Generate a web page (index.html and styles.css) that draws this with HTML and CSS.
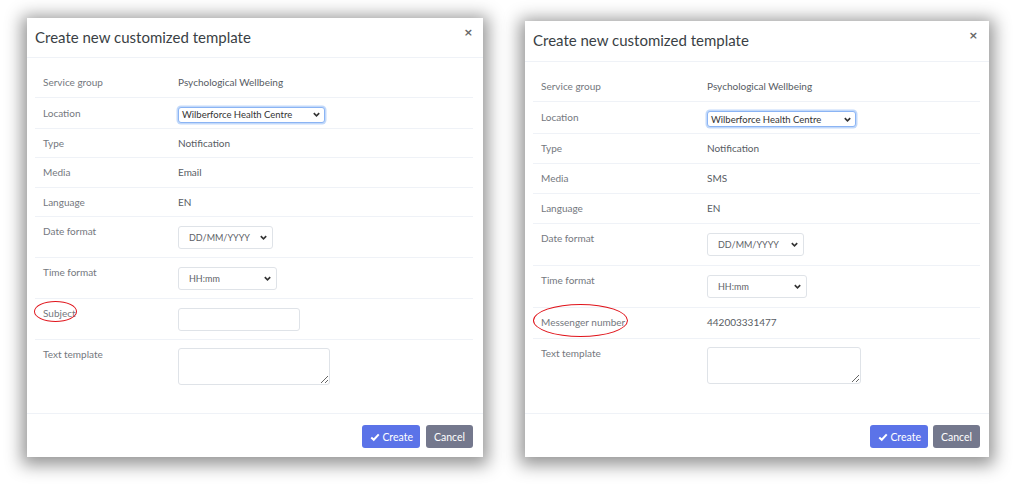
FILE: index.html
```html
<!DOCTYPE html>
<html lang="en">
<head>
    <meta charset="UTF-8">
    <title>Create new customized template</title>
    <link rel="stylesheet" href="styles.css">
</head>
<body>
    <div class="page">
        <!-- EMAIL TEMPLATE MODAL -->
        <div class="modal modal-email">
            <div class="modal-header">
                <h5 class="modal-title">Create new customized template</h5>
                <button class="close-btn">&times;</button>
            </div>
            <div class="modal-body">
                <table class="detail-table">
                    <tr>
                        <td class="label">Service group</td>
                        <td class="value">Psychological Wellbeing</td>
                    </tr>
                    <tr class="row-location">
                        <td class="label">Location</td>
                        <td class="value">
                            <div class="fake-select select-focus">
                                <span>Wilberforce Health Centre</span>
                                <svg class="chevron" viewBox="0 0 10 10"><path d="M2 3.5 L5 6.5 L8 3.5" /></svg>
                            </div>
                        </td>
                    </tr>
                    <tr>
                        <td class="label">Type</td>
                        <td class="value">Notification</td>
                    </tr>
                    <tr>
                        <td class="label">Media</td>
                        <td class="value">Email</td>
                    </tr>
                    <tr>
                        <td class="label">Language</td>
                        <td class="value">EN</td>
                    </tr>
                    <tr class="row-field">
                        <td class="label">Date format</td>
                        <td class="value">
                            <div class="fake-select select-date">
                                <span>DD/MM/YYYY</span>
                                <svg class="chevron" viewBox="0 0 10 10"><path d="M2 3.5 L5 6.5 L8 3.5" /></svg>
                            </div>
                        </td>
                    </tr>
                    <tr class="row-field">
                        <td class="label">Time format</td>
                        <td class="value">
                            <div class="fake-select select-time">
                                <span>HH:mm</span>
                                <svg class="chevron" viewBox="0 0 10 10"><path d="M2 3.5 L5 6.5 L8 3.5" /></svg>
                            </div>
                        </td>
                    </tr>
                    <tr class="row-field">
                        <td class="label"><span class="marked mark-subject">Subject</span></td>
                        <td class="value"><input type="text" class="text-input"></td>
                    </tr>
                    <tr class="row-last">
                        <td class="label">Text template</td>
                        <td class="value"><textarea class="text-area"></textarea></td>
                    </tr>
                </table>
            </div>
            <div class="modal-footer">
                <button class="btn btn-create">
                    <svg class="check" viewBox="0 0 12 12"><path d="M1.5 6.5 L4.5 9.3 L10.5 2.8" /></svg>
                    Create
                </button>
                <button class="btn btn-cancel">Cancel</button>
            </div>
        </div>

        <!-- SMS TEMPLATE MODAL -->
        <div class="modal modal-sms">
            <div class="modal-header">
                <h5 class="modal-title">Create new customized template</h5>
                <button class="close-btn">&times;</button>
            </div>
            <div class="modal-body">
                <table class="detail-table">
                    <tr>
                        <td class="label">Service group</td>
                        <td class="value">Psychological Wellbeing</td>
                    </tr>
                    <tr class="row-location">
                        <td class="label">Location</td>
                        <td class="value">
                            <div class="fake-select select-focus">
                                <span>Wilberforce Health Centre</span>
                                <svg class="chevron" viewBox="0 0 10 10"><path d="M2 3.5 L5 6.5 L8 3.5" /></svg>
                            </div>
                        </td>
                    </tr>
                    <tr>
                        <td class="label">Type</td>
                        <td class="value">Notification</td>
                    </tr>
                    <tr>
                        <td class="label">Media</td>
                        <td class="value">SMS</td>
                    </tr>
                    <tr>
                        <td class="label">Language</td>
                        <td class="value">EN</td>
                    </tr>
                    <tr class="row-field">
                        <td class="label">Date format</td>
                        <td class="value">
                            <div class="fake-select select-date">
                                <span>DD/MM/YYYY</span>
                                <svg class="chevron" viewBox="0 0 10 10"><path d="M2 3.5 L5 6.5 L8 3.5" /></svg>
                            </div>
                        </td>
                    </tr>
                    <tr class="row-field">
                        <td class="label">Time format</td>
                        <td class="value">
                            <div class="fake-select select-time">
                                <span>HH:mm</span>
                                <svg class="chevron" viewBox="0 0 10 10"><path d="M2 3.5 L5 6.5 L8 3.5" /></svg>
                            </div>
                        </td>
                    </tr>
                    <tr class="row-number">
                        <td class="label"><span class="marked mark-number">Messenger number</span></td>
                        <td class="value">442003331477</td>
                    </tr>
                    <tr class="row-last">
                        <td class="label">Text template</td>
                        <td class="value"><textarea class="text-area"></textarea></td>
                    </tr>
                </table>
            </div>
            <div class="modal-footer">
                <button class="btn btn-create">
                    <svg class="check" viewBox="0 0 12 12"><path d="M1.5 6.5 L4.5 9.3 L10.5 2.8" /></svg>
                    Create
                </button>
                <button class="btn btn-cancel">Cancel</button>
            </div>
        </div>
    </div>
</body>
</html>
```

FILE: styles.css
```css
:root {
    --primary-color: #5b73e8;
    --muted-color: #74788d;
    --text-color: #575c63;
    --label-color: #74787e;
    --border-color: #eff2f7;
    --input-border: #dfe3e8;
}

body {
    margin: 0;
    min-height: 100vh;
    font-family: Lato, "Liberation Sans", sans-serif;
    background-color: #ffffff;
    color: var(--text-color);
}

.page {
    display: flex;
    align-items: flex-start;
    gap: 42px;
    padding: 18px 0 27px 27px;
}

/* MODAL STYLES */
.modal {
    background: white;
    box-shadow: 0 3px 16px 5px rgba(0,0,0,0.42);
    display: flex;
    flex-direction: column;
}

.modal-email {
    width: 456px;
}

.modal-sms {
    width: 464px;
    margin-top: 3px;
}

.modal-header {
    display: flex;
    justify-content: space-between;
    align-items: flex-start;
    padding: 12px 10px 12px 8px;
    border-bottom: 1px solid var(--border-color);
}

.modal-sms .modal-header {
    padding-bottom: 13px;
}

.modal-title {
    margin: 0;
    font-size: 15px;
    line-height: 15px;
    font-weight: 400;
    color: #3a3f45;
}

.close-btn {
    background: none;
    border: none;
    padding: 0;
    margin-top: -3px;
    font-family: "DejaVu Sans", sans-serif;
    font-size: 11px;
    font-weight: bold;
    line-height: 12px;
    color: #666;
    cursor: pointer;
}

.modal-sms .close-btn {
    margin-right: 1px;
}

.modal-body {
    padding: 10px 10px 20px 8px;
}

.modal-sms .modal-body {
    padding: 10px 9px 21px 8px;
}

/* DETAIL TABLE */
.detail-table {
    width: 100%;
    border-collapse: collapse;
    font-size: 10px;
}

.detail-table td {
    padding: 8px 0 7.5px;
    line-height: 13px;
    vertical-align: top;
    border-bottom: 1px solid var(--border-color);
}

.modal-sms .detail-table td {
    padding-bottom: 8px;
}

.detail-table td.label {
    padding-left: 8px;
    color: var(--label-color);
}

.modal-email td.label {
    width: 135px;
}

.modal-sms td.label {
    width: 166px;
}

.detail-table .row-location td {
    padding-top: 9px;
    padding-bottom: 5px;
}

.modal-sms .row-location td {
    padding-bottom: 6px;
}

.detail-table .row-field td.value {
    padding-top: 9px;
}

.detail-table .row-field td {
    padding-bottom: 8px;
}

.modal-sms .row-field td,
.modal-sms .row-number td {
    padding-bottom: 9px;
}

.detail-table .row-last td {
    padding-bottom: 8px;
    border-bottom: none;
}

/* FORM CONTROLS */
.fake-select {
    display: flex;
    justify-content: space-between;
    align-items: center;
    box-sizing: border-box;
    border: 1px solid var(--input-border);
    border-radius: 3px;
    background: white;
    color: #5d6167;
    font-size: 9px;
}

.select-focus {
    width: 147px;
    height: 16px;
    padding: 0 3px 0 3px;
    border-color: #8bb4f4;
    box-shadow: 0 0 0 1.5px rgba(120,170,245,0.45);
    color: #333;
    font-size: 9.5px;
}

.select-date {
    width: 95px;
    height: 23px;
    padding: 0 4px 0 10px;
}

.select-time {
    width: 99px;
    height: 23px;
    padding: 0 4px 0 10px;
}

.modal-sms .select-focus {
    width: 149px;
}

.modal-sms .select-date {
    width: 97px;
}

.modal-sms .select-time {
    width: 100px;
}

.chevron {
    width: 9px;
    height: 9px;
    fill: none;
    stroke: #333;
    stroke-width: 1.8;
}

.text-input {
    display: block;
    box-sizing: border-box;
    width: 122px;
    height: 23px;
    margin: 0;
    border: 1px solid var(--input-border);
    border-radius: 3px;
}

.text-area {
    display: block;
    box-sizing: border-box;
    width: 152px;
    height: 37px;
    margin: 0;
    border: 1px solid var(--input-border);
    border-radius: 3px;
}

.modal-sms .text-area {
    width: 154px;
}

/* ANNOTATIONS */
.marked {
    position: relative;
}

.marked::after {
    content: "";
    position: absolute;
    border: 1.5px solid #e0141b;
    border-radius: 50%;
}

.mark-subject::after {
    left: -9px;
    top: -6px;
    width: 41px;
    height: 19px;
}

.mark-number::after {
    left: -8px;
    top: -12px;
    width: 93px;
    height: 31px;
}

/* FOOTER */
.modal-footer {
    display: flex;
    justify-content: flex-end;
    gap: 6px;
    padding: 11px 10px 9px;
    border-top: 1px solid var(--border-color);
}

.modal-sms .modal-footer {
    padding-right: 9px;
    gap: 5px;
}

.btn {
    display: flex;
    align-items: center;
    height: 23px;
    border: none;
    border-radius: 3px;
    color: white;
    font-family: Lato, "Liberation Sans", sans-serif;
    font-size: 10.5px;
    cursor: pointer;
}

.btn-create {
    background: var(--primary-color);
    padding: 0 7px 0 8px;
    gap: 2px;
}

.btn-cancel {
    background: var(--muted-color);
    padding: 0 8px;
}

.check {
    width: 10px;
    height: 10px;
    fill: none;
    stroke: white;
    stroke-width: 2.4;
}
```
